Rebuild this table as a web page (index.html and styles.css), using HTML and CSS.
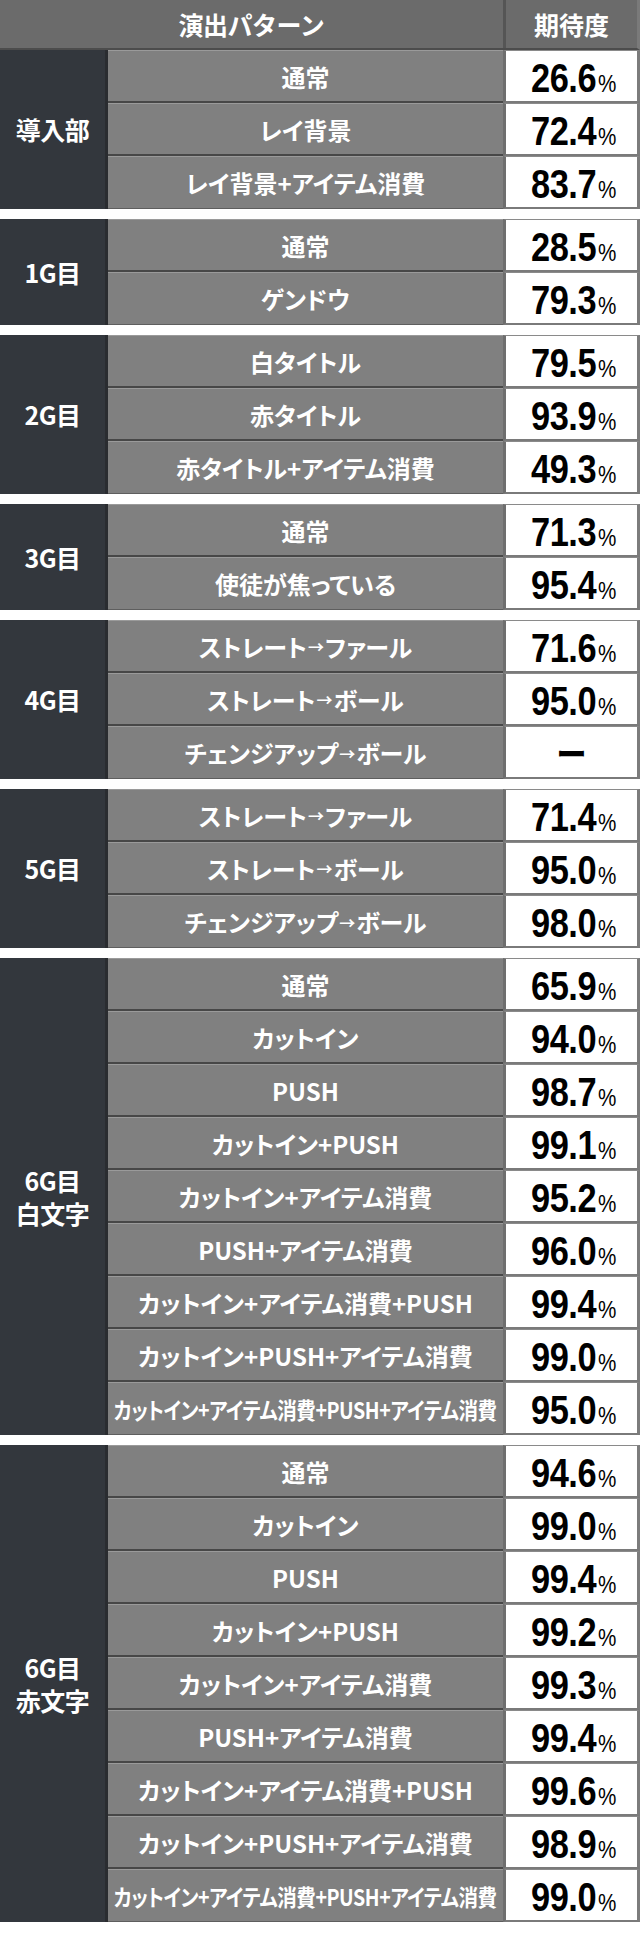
FILE: index.html
```html
<!DOCTYPE html>
<html lang="ja">
<head>
<meta charset="utf-8">
<title>期待度</title>
<link rel="stylesheet" href="styles.css">
</head>
<body>
<div class="table">
  <div class="head">
    <div class="h-pat">演出パターン</div>
    <div class="h-val">期待度</div>
  </div>

  <div class="sec">
    <div class="label">導入部</div>
    <div class="rows">
      <div class="row"><div class="pat">通常</div><div class="val"><span class="v"><span class="num">26.6</span><span class="pct">%</span></span></div></div>
      <div class="row"><div class="pat">レイ背景</div><div class="val"><span class="v"><span class="num">72.4</span><span class="pct">%</span></span></div></div>
      <div class="row"><div class="pat">レイ背景+アイテム消費</div><div class="val"><span class="v"><span class="num">83.7</span><span class="pct">%</span></span></div></div>
    </div>
  </div>

  <div class="sec">
    <div class="label">1G目</div>
    <div class="rows">
      <div class="row"><div class="pat">通常</div><div class="val"><span class="v"><span class="num">28.5</span><span class="pct">%</span></span></div></div>
      <div class="row"><div class="pat">ゲンドウ</div><div class="val"><span class="v"><span class="num">79.3</span><span class="pct">%</span></span></div></div>
    </div>
  </div>

  <div class="sec">
    <div class="label">2G目</div>
    <div class="rows">
      <div class="row"><div class="pat">白タイトル</div><div class="val"><span class="v"><span class="num">79.5</span><span class="pct">%</span></span></div></div>
      <div class="row"><div class="pat">赤タイトル</div><div class="val"><span class="v"><span class="num">93.9</span><span class="pct">%</span></span></div></div>
      <div class="row"><div class="pat">赤タイトル+アイテム消費</div><div class="val"><span class="v"><span class="num">49.3</span><span class="pct">%</span></span></div></div>
    </div>
  </div>

  <div class="sec">
    <div class="label">3G目</div>
    <div class="rows">
      <div class="row"><div class="pat">通常</div><div class="val"><span class="v"><span class="num">71.3</span><span class="pct">%</span></span></div></div>
      <div class="row"><div class="pat">使徒が焦っている</div><div class="val"><span class="v"><span class="num">95.4</span><span class="pct">%</span></span></div></div>
    </div>
  </div>

  <div class="sec">
    <div class="label">4G目</div>
    <div class="rows">
      <div class="row"><div class="pat">ストレート<span class="arr">→</span>ファール</div><div class="val"><span class="v"><span class="num">71.6</span><span class="pct">%</span></span></div></div>
      <div class="row"><div class="pat">ストレート<span class="arr">→</span>ボール</div><div class="val"><span class="v"><span class="num">95.0</span><span class="pct">%</span></span></div></div>
      <div class="row"><div class="pat">チェンジアップ<span class="arr">→</span>ボール</div><div class="val"><span class="dash">ー</span></div></div>
    </div>
  </div>

  <div class="sec">
    <div class="label">5G目</div>
    <div class="rows">
      <div class="row"><div class="pat">ストレート<span class="arr">→</span>ファール</div><div class="val"><span class="v"><span class="num">71.4</span><span class="pct">%</span></span></div></div>
      <div class="row"><div class="pat">ストレート<span class="arr">→</span>ボール</div><div class="val"><span class="v"><span class="num">95.0</span><span class="pct">%</span></span></div></div>
      <div class="row"><div class="pat">チェンジアップ<span class="arr">→</span>ボール</div><div class="val"><span class="v"><span class="num">98.0</span><span class="pct">%</span></span></div></div>
    </div>
  </div>

  <div class="sec">
    <div class="label"><span class="ln">6G目</span><span class="ln">白文字</span></div>
    <div class="rows">
      <div class="row"><div class="pat">通常</div><div class="val"><span class="v"><span class="num">65.9</span><span class="pct">%</span></span></div></div>
      <div class="row"><div class="pat">カットイン</div><div class="val"><span class="v"><span class="num">94.0</span><span class="pct">%</span></span></div></div>
      <div class="row"><div class="pat">PUSH</div><div class="val"><span class="v"><span class="num">98.7</span><span class="pct">%</span></span></div></div>
      <div class="row"><div class="pat">カットイン+PUSH</div><div class="val"><span class="v"><span class="num">99.1</span><span class="pct">%</span></span></div></div>
      <div class="row"><div class="pat">カットイン+アイテム消費</div><div class="val"><span class="v"><span class="num">95.2</span><span class="pct">%</span></span></div></div>
      <div class="row"><div class="pat">PUSH+アイテム消費</div><div class="val"><span class="v"><span class="num">96.0</span><span class="pct">%</span></span></div></div>
      <div class="row"><div class="pat">カットイン+アイテム消費+PUSH</div><div class="val"><span class="v"><span class="num">99.4</span><span class="pct">%</span></span></div></div>
      <div class="row"><div class="pat">カットイン+PUSH+アイテム消費</div><div class="val"><span class="v"><span class="num">99.0</span><span class="pct">%</span></span></div></div>
      <div class="row"><div class="pat"><span class="tight">カットイン+アイテム消費+PUSH+アイテム消費</span></div><div class="val"><span class="v"><span class="num">95.0</span><span class="pct">%</span></span></div></div>
    </div>
  </div>

  <div class="sec">
    <div class="label"><span class="ln">6G目</span><span class="ln">赤文字</span></div>
    <div class="rows">
      <div class="row"><div class="pat">通常</div><div class="val"><span class="v"><span class="num">94.6</span><span class="pct">%</span></span></div></div>
      <div class="row"><div class="pat">カットイン</div><div class="val"><span class="v"><span class="num">99.0</span><span class="pct">%</span></span></div></div>
      <div class="row"><div class="pat">PUSH</div><div class="val"><span class="v"><span class="num">99.4</span><span class="pct">%</span></span></div></div>
      <div class="row"><div class="pat">カットイン+PUSH</div><div class="val"><span class="v"><span class="num">99.2</span><span class="pct">%</span></span></div></div>
      <div class="row"><div class="pat">カットイン+アイテム消費</div><div class="val"><span class="v"><span class="num">99.3</span><span class="pct">%</span></span></div></div>
      <div class="row"><div class="pat">PUSH+アイテム消費</div><div class="val"><span class="v"><span class="num">99.4</span><span class="pct">%</span></span></div></div>
      <div class="row"><div class="pat">カットイン+アイテム消費+PUSH</div><div class="val"><span class="v"><span class="num">99.6</span><span class="pct">%</span></span></div></div>
      <div class="row"><div class="pat">カットイン+PUSH+アイテム消費</div><div class="val"><span class="v"><span class="num">98.9</span><span class="pct">%</span></span></div></div>
      <div class="row"><div class="pat"><span class="tight">カットイン+アイテム消費+PUSH+アイテム消費</span></div><div class="val"><span class="v"><span class="num">99.0</span><span class="pct">%</span></span></div></div>
    </div>
  </div>
</div>
</body>
</html>
```

FILE: styles.css
```css
* {
  box-sizing: border-box;
}

html, body {
  margin: 0;
  padding: 0;
  background: #ffffff;
}

body {
  width: 640px;
  font-family: "Noto Sans CJK JP", "Noto Sans", sans-serif;
  font-weight: 700;
  color: #ffffff;
}

.table {
  display: flex;
  flex-direction: column;
  gap: 10px;
  padding-bottom: 13px;
}

.head {
  display: flex;
  height: 50px;
  margin-bottom: -10px;
  background: #6b6b6b;
  border-bottom: 2px solid #4c4c4c;
  border-right: 3px solid #7a7a7a;
}

.h-pat {
  flex: 1;
  display: flex;
  align-items: center;
  justify-content: center;
  font-size: 25px;
  letter-spacing: -0.5px;
}

.h-val {
  flex: none;
  width: 134px;
  display: flex;
  align-items: center;
  justify-content: center;
  font-size: 25px;
  border-left: 3px solid #555555;
}

.sec {
  display: flex;
}

.label {
  flex: none;
  width: 108px;
  display: flex;
  flex-direction: column;
  align-items: center;
  justify-content: center;
  text-align: center;
  background: #33373d;
  border-right: 3px solid #2a2c30;
  font-size: 25px;
  line-height: 33px;
  letter-spacing: -0.5px;
  white-space: nowrap;
}

.ln {
  display: block;
  height: 33px;
  line-height: 33px;
}

.rows {
  flex: 1;
  min-width: 0;
  display: flex;
  flex-direction: column;
}

.row {
  display: flex;
  height: 53px;
}

.pat {
  flex: 1;
  min-width: 0;
  display: flex;
  align-items: center;
  justify-content: center;
  background: #808080;
  border-top: 1px solid #9a9a9a;
  border-bottom: 2px solid #474747;
  font-size: 24px;
  font-feature-settings: "palt";
  white-space: nowrap;
}

.row:last-child .pat {
  border-bottom: 1px solid #5e5e5e;
}

.arr {
  font-size: 16px;
  margin: 0 1px;
}

.tight {
  display: inline-block;
  font-size: 23px;
  transform: scaleX(0.85);
  letter-spacing: -0.5px;
}

.val {
  flex: none;
  width: 137px;
  display: flex;
  align-items: center;
  justify-content: center;
  background: #ffffff;
  border-left: 3px solid #6e6e6e;
  border-right: 3px solid #7c7c7c;
  border-bottom: 2px solid #7a7a7a;
  border-top: 1px solid #8a8a8a;
  color: #000000;
}

.v {
  display: inline-flex;
  align-items: baseline;
  transform: scaleX(0.86);
  padding-top: 4px;
  margin-left: 4px;
}

.num {
  font-family: "Liberation Sans", Arial, sans-serif;
  font-weight: 700;
  font-size: 40px;
  letter-spacing: -0.5px;
}

.pct {
  font-family: "Liberation Sans", Arial, sans-serif;
  font-weight: 400;
  font-size: 24px;
  margin-left: 2px;
}

.dash {
  font-family: "Noto Sans CJK JP", sans-serif;
  font-weight: 900;
  font-size: 30px;
}
```
